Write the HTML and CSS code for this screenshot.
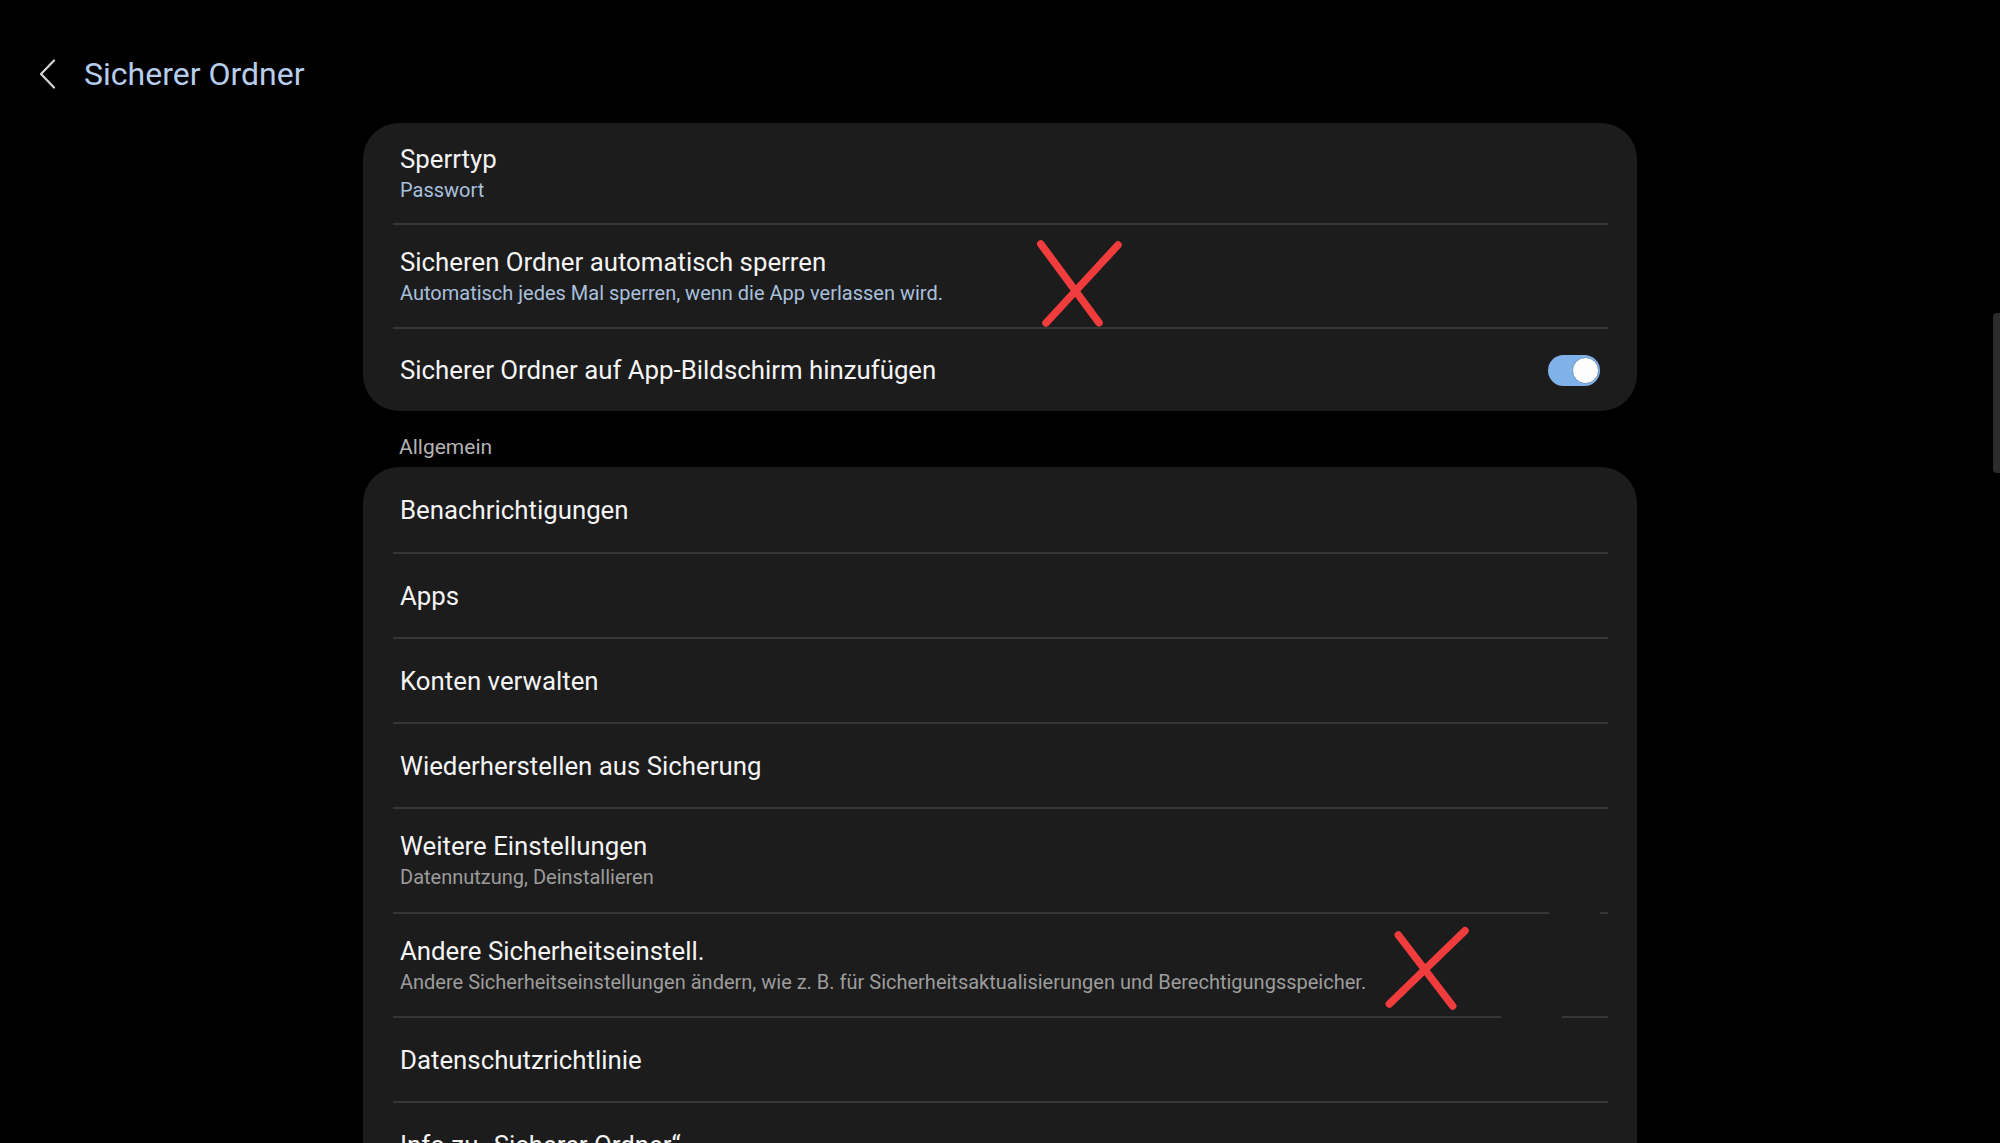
FILE: index.html
```html
<!DOCTYPE html>
<html lang="de">
<head>
<meta charset="utf-8">
<title>Sicherer Ordner</title>
<link rel="stylesheet" href="styles.css">
</head>
<body>
<div class="screen">
  <header class="topbar">
    <span class="back" aria-label="Zurück">
      <svg viewBox="0 0 17 30" width="17" height="30"><path d="M15 1.5 L2 15 L15 28.5" fill="none" stroke="#d6d6d6" stroke-width="2.2" stroke-linecap="round" stroke-linejoin="round"/></svg>
    </span>
    <h1 class="title">Sicherer Ordner</h1>
  </header>

  <main class="content">
    <section class="card">
      <div class="row h100">
        <div class="text">
          <div class="primary">Sperrtyp</div>
          <div class="secondary accent">Passwort</div>
        </div>
      </div>
      <div class="row h104">
        <div class="text">
          <div class="primary">Sicheren Ordner automatisch sperren</div>
          <div class="secondary accent">Automatisch jedes Mal sperren, wenn die App verlassen wird.</div>
        </div>
      </div>
      <div class="row h84">
        <div class="text">
          <div class="primary">Sicherer Ordner auf App-Bildschirm hinzufügen</div>
        </div>
        <span class="toggle"><span class="knob"></span></span>
      </div>
    </section>

    <div class="section-label">Allgemein</div>

    <section class="card">
      <div class="row h85"><div class="text"><div class="primary">Benachrichtigungen</div></div></div>
      <div class="row h85"><div class="text"><div class="primary">Apps</div></div></div>
      <div class="row h85"><div class="text"><div class="primary">Konten verwalten</div></div></div>
      <div class="row h85"><div class="text"><div class="primary">Wiederherstellen aus Sicherung</div></div></div>
      <div class="row h105">
        <div class="text">
          <div class="primary">Weitere Einstellungen</div>
          <div class="secondary">Datennutzung, Deinstallieren</div>
        </div>
      </div>
      <div class="row h104 gap-a">
        <div class="text">
          <div class="primary">Andere Sicherheitseinstell.</div>
          <div class="secondary">Andere Sicherheitseinstellungen ändern, wie z. B. für Sicherheitsaktualisierungen und Berechtigungsspeicher.</div>
        </div>
      </div>
      <div class="row h85 gap-b"><div class="text"><div class="primary">Datenschutzrichtlinie</div></div></div>
      <div class="row h85"><div class="text"><div class="primary">Info zu „Sicherer Ordner“</div></div></div>
    </section>
  </main>

  <svg class="mark mark-1" viewBox="0 0 100 100" width="100" height="100">
    <line x1="10.8" y1="9" x2="69" y2="87.7"/>
    <line x1="88" y1="10" x2="16" y2="88"/>
  </svg>
  <svg class="mark mark-2" viewBox="0 0 100 100" width="100" height="100">
    <line x1="18.3" y1="15" x2="72.7" y2="86"/>
    <line x1="85" y1="10.7" x2="9.3" y2="84"/>
  </svg>

  <div class="scroll-thumb"></div>
</div>
</body>
</html>
```

FILE: styles.css
```css
* { box-sizing: border-box; }

html, body {
  margin: 0;
  padding: 0;
  height: 1143px;
  overflow: hidden;
  background: #000;
}

body {
  font-family: Roboto, "Noto Sans", "Liberation Sans", sans-serif;
  color: #f4f4f4;
}

.screen {
  position: relative;
  width: 2000px;
  height: 1143px;
  overflow: hidden;
}

.topbar {
  display: flex;
  align-items: center;
  height: 123px;
  padding: 25px 0 0 39px;
}

.back {
  display: flex;
  width: 17px;
  height: 30px;
  margin-right: 28px;
}

.title {
  margin: 0;
  font-size: 32px;
  font-weight: 400;
  line-height: 40px;
  color: #b7cdeb;
}

.content {
  display: flex;
  flex-direction: column;
  align-items: center;
}

.card {
  width: 1274px;
  background: #1c1c1c;
  border-radius: 36px;
  display: flex;
  flex-direction: column;
}

.row {
  display: flex;
  align-items: center;
  justify-content: space-between;
  margin: 0 29px 0 30px;
  padding: 0 8px 0 7px;
}

.row + .row {
  border-top: 2px solid #363636;
}

.h84 { height: 84px; }
.h85 { height: 85px; }
.h100 { height: 100px; }
.h104 { height: 104px; }
.h105 { height: 105px; }

.row.gap-a {
  border-top-color: transparent;
  background: linear-gradient(to right, #363636 0, #363636 1156px, transparent 1156px, transparent 1207px, #363636 1207px) top left / 100% 2px no-repeat;
  background-origin: border-box;
}

.row.gap-b {
  border-top-color: transparent;
  background: linear-gradient(to right, #363636 0, #363636 1108px, transparent 1108px, transparent 1169px, #363636 1169px) top left / 100% 2px no-repeat;
  background-origin: border-box;
}

.text {
  display: flex;
  flex-direction: column;
}

.primary {
  font-size: 25.8px;
  line-height: 34px;
  color: #f4f4f4;
  white-space: nowrap;
}

.secondary {
  font-size: 20px;
  line-height: 29px;
  color: #9c9c9c;
  white-space: nowrap;
}

.secondary.accent {
  color: #a9c0dd;
}

.section-label {
  width: 1274px;
  height: 56px;
  padding: 16px 0 0 36px;
  font-size: 21px;
  line-height: 40px;
  color: #b3b3b3;
}

.toggle {
  display: flex;
  align-items: center;
  justify-content: flex-end;
  width: 52px;
  height: 31px;
  padding: 0 1px;
  border-radius: 16px;
  background: #80b2ea;
}

.knob {
  width: 27px;
  height: 27px;
  border-radius: 50%;
  background: #fdfdfd;
  border: 1px solid #6f92bd;
}

.mark {
  position: absolute;
  fill: none;
  stroke: #f03c3c;
  stroke-width: 7.5;
  stroke-linecap: round;
}

.mark-1 { left: 1030px; top: 235px; }
.mark-2 { left: 1380px; top: 920px; }

.scroll-thumb {
  position: absolute;
  right: 0;
  top: 313px;
  width: 7px;
  height: 160px;
  background: #2c2c2c;
  border-radius: 4px 0 0 4px;
}
```
